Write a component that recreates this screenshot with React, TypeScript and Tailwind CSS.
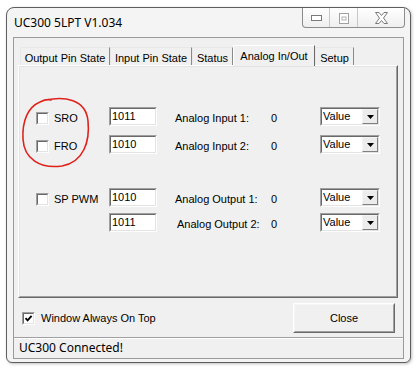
import React from "react";

const sans = { fontFamily: '"Liberation Sans", Arial, sans-serif' };
const ui = { fontFamily: '"Noto Sans", "Open Sans", sans-serif' };

function Sunken({ className = "", children }: { className?: string; children?: React.ReactNode }) {
  return (
    <div className={`border border-t-[#a0a0a0] border-l-[#a0a0a0] border-b-white border-r-white ${className}`}>
      <div className="w-full h-full border border-t-[#696969] border-l-[#696969] border-b-[#e3e3e3] border-r-[#e3e3e3] bg-white flex items-center">
        {children}
      </div>
    </div>
  );
}

function CheckBox({ checked = false }: { checked?: boolean }) {
  return (
    <Sunken className="w-[13px] h-[13px] shrink-0">
      {checked && (
        <svg width="9" height="9" viewBox="0 0 9 9" className="block">
          <path d="M1.5 4.2 L3.6 6.4 L7.6 1.8" fill="none" stroke="#000" strokeWidth="1.8" />
        </svg>
      )}
    </Sunken>
  );
}

function Field({ value }: { value: string }) {
  return (
    <Sunken className="w-[48px] h-[19px] shrink-0">
      <span className="pl-[1px] text-[11px] leading-none text-black" style={sans}>{value}</span>
    </Sunken>
  );
}

function Select() {
  return (
    <Sunken className="w-[60px] h-[19px] shrink-0">
      <div className="flex w-full h-full items-center justify-between">
        <span className="pl-[1px] text-[11px] leading-none text-black" style={sans}>Value</span>
        <div className="w-[16px] h-[15px] border border-t-[#f4f4f4] border-l-[#f4f4f4] border-b-[#808080] border-r-[#808080] bg-[#ececec] flex items-center justify-center">
          <svg width="7" height="4" viewBox="0 0 7 4" className="block">
            <path d="M0 0 H7 L3.5 4 Z" fill="#000" />
          </svg>
        </div>
      </div>
    </Sunken>
  );
}

function Row({
  check,
  value,
  label,
  labelShift = false,
}: {
  check?: string;
  value: string;
  label: string;
  labelShift?: boolean;
}) {
  return (
    <div className="flex items-center h-[19px] pl-[16px]" style={sans}>
      <div className="w-[73px] flex items-center pt-[3px]">
        {check && (
          <>
            <CheckBox />
            <span className="ml-[5px] text-[11px] text-black leading-none">{check}</span>
          </>
        )}
      </div>
      <Field value={value} />
      <div className={`w-[96px] ml-[18px] pt-[3px] text-[11px] leading-none text-black ${labelShift ? "pl-[2px]" : ""}`}>
        {label}
      </div>
      <div className="w-[49px] pt-[3px] text-[11px] leading-none text-black">0</div>
      <Select />
    </div>
  );
}

function Tab({ label, w, selected = false }: { label: string; w: string; selected?: boolean }) {
  if (selected) {
    return (
      <div
        className={`${w} h-[21px] -mb-[1px] relative z-10 bg-[#f0f0f0] border-t border-l border-r border-t-white border-l-white border-r-[#696969] flex items-start justify-center pt-[2px] text-[11px] text-black`}
        style={sans}
      >
        {label}
      </div>
    );
  }
  return (
    <div
      className={`${w} h-[18px] bg-[#f0f0f0] border-t border-l border-r border-t-[#e8e8e8] border-l-[#e8e8e8] border-r-[#8a8a8a] flex items-start justify-center pt-[2px] text-[11px] text-black`}
      style={sans}
    >
      {label}
    </div>
  );
}

export default function App() {
  return (
    <div className="w-[418px] h-[373px] bg-white pt-[7px] pl-[6px] overflow-hidden">
      <div className="relative w-[405px] h-[356px] border border-[#5e5e5e] rounded-t-[8px] rounded-b-[6px] bg-[#f4f4f4] flex flex-col shadow-[1px_1px_3px_rgba(0,0,0,0.25)]">
        {/* Title bar */}
        <div className="h-[29px] shrink-0 flex items-center pl-[7px] pt-[1px] text-[12px] text-black" style={ui}>
          UC300 5LPT V1.034
        </div>
        {/* Caption buttons */}
        <div className="absolute top-0 right-[5px] h-[20px] flex border border-t-0 border-[#8c8c8c] rounded-b-[4px] bg-gradient-to-b from-white to-[#efefef] overflow-hidden">
          <div className="w-[27px] h-full flex items-center justify-center border-r border-[#c8c8c8] pt-[1px]">
            <svg width="11" height="6" viewBox="0 0 11 6" className="block">
              <rect x="0.5" y="0.5" width="10" height="5" fill="white" stroke="#7a7a7a" />
            </svg>
          </div>
          <div className="w-[28px] h-full flex items-center justify-center border-r border-[#c8c8c8] pt-[1px]">
            <svg width="10" height="11" viewBox="0 0 10 11" className="block">
              <rect x="0.5" y="0.5" width="9" height="10" fill="white" stroke="#a0a0a0" />
              <rect x="3" y="4" width="4" height="3" fill="none" stroke="#b0b0b0" />
            </svg>
          </div>
          <div className="w-[46px] h-full flex items-center justify-center pt-[1px]">
            <svg width="13" height="12" viewBox="0 0 13 12" className="block">
              <path
                d="M0.5 0.5 H4 L6.5 3.5 L9 0.5 H12.5 L8.5 6 L12.5 11.5 H9 L6.5 8.5 L4 11.5 H0.5 L4.5 6 Z"
                fill="white"
                stroke="#7a7a7a"
                strokeWidth="1"
                strokeLinejoin="round"
              />
            </svg>
          </div>
        </div>

        {/* Client area */}
        <div className="mx-[6px] mb-[3px] h-[322px] border border-[#9a9a9a] bg-[#f0f0f0] flex flex-col">
          <div className="h-[7px] shrink-0" />
          {/* Tab strip */}
          <div className="h-[20px] flex items-end pl-[6px] shrink-0">
            <Tab label="Output Pin State" w="w-[90px]" />
            <Tab label="Input Pin State" w="w-[82px]" />
            <Tab label="Status" w="w-[41px]" />
            <Tab label="Analog In/Out" w="w-[82px]" selected />
            <Tab label="Setup" w="w-[39px]" />
          </div>
          {/* Tab panel */}
          <div className="ml-[4px] w-[380px] h-[233px] shrink-0 border border-t-white border-l-white border-b-[#696969] border-r-[#696969]">
            <div className="relative w-full h-full border border-t-[#e3e3e3] border-l-[#e3e3e3] border-b-[#a0a0a0] border-r-[#a0a0a0]">
              <div className="pt-[40px]">
                <Row check="SRO" value="1011" label="Analog Input 1:" />
                <div className="h-[9px]" />
                <Row check="FRO" value="1010" label="Analog Input 2:" />
                <div className="h-[34px]" />
                <Row check="SP PWM" value="1010" label="Analog Output 1:" />
                <div className="h-[6px]" />
                <Row value="1011" label="Analog Output 2:" labelShift />
              </div>
              {/* red annotation circle */}
              <svg className="absolute left-[0px] top-[28px]" width="80" height="80" viewBox="0 0 80 80">
                <path
                  d="M26 5 C44 1, 66 4, 68 26 C70 46, 64 67, 42 71 C20 74, 4 64, 3 44 C2 26, 8 12, 20 7 C24 5, 28 4, 31 5"
                  fill="none"
                  stroke="#e0221c"
                  strokeWidth="1.6"
                  strokeLinecap="round"
                />
              </svg>
            </div>
          </div>
          {/* Bottom row */}
          <div className="h-[5px] shrink-0" />
          <div className="h-[30px] shrink-0 flex items-center justify-between pl-[8px] pr-[8px]" style={sans}>
            <div className="flex items-center">
              <CheckBox checked />
              <span className="ml-[6px] text-[11px] text-black leading-none">Window Always On Top</span>
            </div>
            <div className="w-[102px] h-[30px] border border-t-white border-l-white border-b-[#696969] border-r-[#696969]">
              <div className="w-full h-full border border-t-[#f6f6f6] border-l-[#f6f6f6] border-b-[#a0a0a0] border-r-[#a0a0a0] bg-[#f0f0f0] flex items-center justify-center text-[11px] text-black">
                Close
              </div>
            </div>
          </div>
          <div className="h-[4px] shrink-0" />
          <div className="h-[1px] bg-[#a0a0a0] shrink-0" />
          <div className="flex-1 flex items-center pl-[5px] pb-[1px] text-[12px] text-black border-t border-white" style={ui}>
            UC300 Connected!
          </div>
        </div>
      </div>
    </div>
  );
}
